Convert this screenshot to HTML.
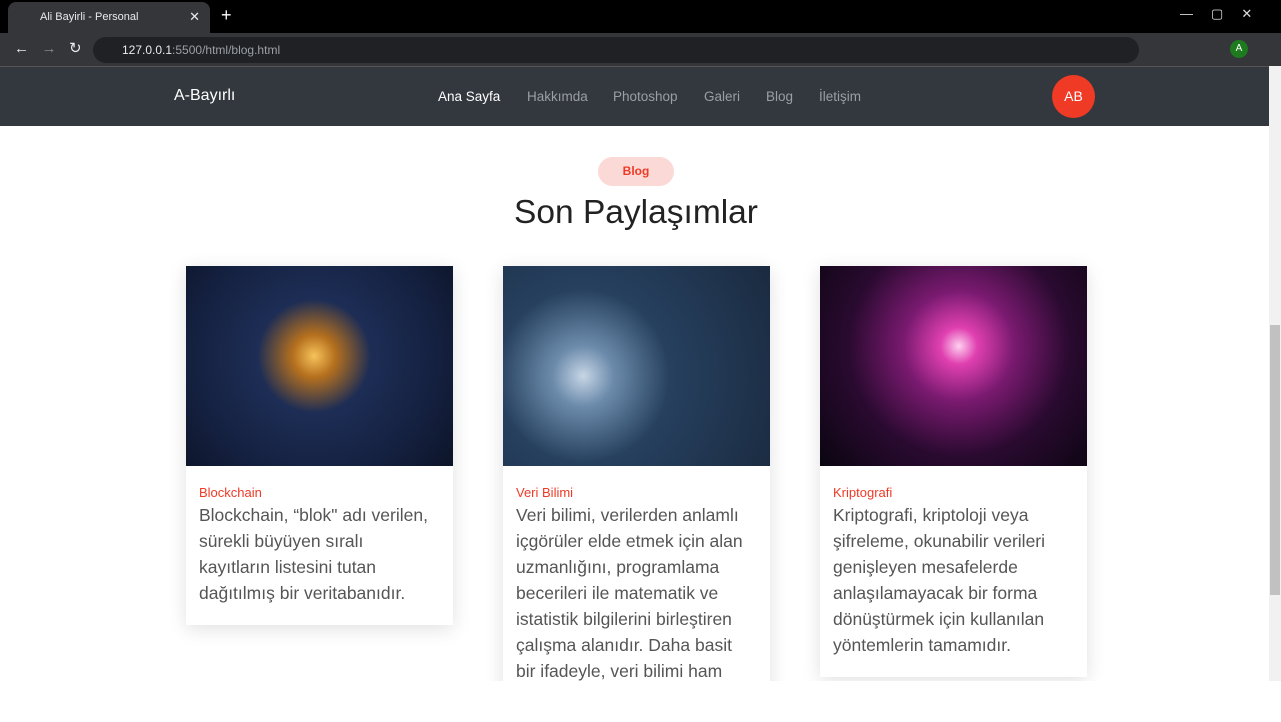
<!DOCTYPE html>
<html><head><meta charset="utf-8"><style>
*{margin:0;padding:0;box-sizing:border-box}
html,body{width:1281px;height:722px;overflow:hidden}
body{background:#fff;font-family:"Liberation Sans",sans-serif;position:relative}
.tabbar{position:absolute;left:0;top:0;width:1281px;height:33px;background:#000}
.tab{position:absolute;left:8px;top:2px;width:202px;height:31px;background:#35363a;border-radius:8px 8px 0 0;color:#e8eaed;font-size:11px;padding:9px 0 0 32px}
.tab .x{position:absolute;right:10px;top:7px;font-size:13px}
.tool{position:absolute;left:0;top:33px;width:1281px;height:33px;background:#35363a}
.url{position:absolute;left:93px;top:4px;width:1046px;height:26px;background:#202124;border-radius:13px;color:#9aa0a6;font-size:12px;padding:6px 0 0 29px}
.url b{color:#e8eaed;font-weight:normal}
.nav{position:absolute;left:0;top:66px;width:1269px;height:60px;background:#33373e;border-top:1px solid #555}
.nav a{position:absolute;top:22px;font-size:13.5px;color:#9a9ea5}
.ab{position:absolute;left:1052px;top:8px;width:43px;height:43px;border-radius:50%;background:#ef3a26;color:#fff;font-size:14px;text-align:center;line-height:43px}
.sb{position:absolute;left:1269px;top:66px;width:12px;height:615px;background:#f1f1f1}
.sb i{position:absolute;left:1px;top:259px;width:10px;height:270px;background:#c1c1c1}
.pill{position:absolute;left:598px;top:157px;width:76px;height:29px;border-radius:15px;background:#fbd9d6;color:#ef3a26;font-size:12px;font-weight:bold;text-align:center;line-height:29px}
h1{position:absolute;left:0;width:1272px;top:194px;text-align:center;font-weight:normal;font-size:33.5px;color:#222}
.card{position:absolute;top:266px;width:267px;background:#fff;box-shadow:0 4px 18px rgba(0,0,0,.12)}
.img{height:200px}
.cat{color:#ef3a26;font-size:13px;margin:19px 13px 2px}
.txt{color:#555;font-size:17.5px;line-height:26px;margin:0 13px 19px;white-space:nowrap}
.clip{position:absolute;left:0;top:681px;width:1281px;height:41px;background:#fff;z-index:10}
</style></head><body>
<div class="tabbar"><div class="tab">Ali Bayirli - Personal<span class="x">✕</span></div><span style="position:absolute;left:221px;top:5px;color:#fff;font-size:18px">+</span>
<span style="position:absolute;left:1180px;top:6px;color:#ddd;font-size:13px">—&nbsp;&nbsp;&nbsp;&nbsp;&nbsp;▢&nbsp;&nbsp;&nbsp;&nbsp;&nbsp;✕</span></div>
<div class="tool"><span style="position:absolute;left:14px;top:6px;color:#e8eaed;font-size:15px">←&nbsp;&nbsp; <span style="color:#888">→</span>&nbsp;&nbsp; ↻</span>
<div class="url"><b>127.0.0.1</b>:5500/html/blog.html</div>
<div style="position:absolute;left:1230px;top:7px;width:18px;height:18px;border-radius:50%;background:#1e7a1e;color:#fff;font-size:10px;text-align:center;line-height:18px">A</div></div>
<div class="nav">
<span style="position:absolute;left:174px;top:20px;color:#fff;font-size:16px">A-Bayırlı</span>
<a style="left:438px;color:#fff">Ana Sayfa</a><a style="left:527px">Hakkımda</a><a style="left:613px">Photoshop</a><a style="left:704px">Galeri</a><a style="left:766px">Blog</a><a style="left:819px">İletişim</a>
<div class="ab">AB</div></div>
<div class="sb"><i></i></div>
<div class="pill">Blog</div>
<h1>Son Paylaşımlar</h1>
<div class="card" style="left:186px"><div class="img" style="background:radial-gradient(circle at 48% 45%,#f7c25a 0,#b5701e 12%,#1d2d55 32%,#14203f 70%,#0c1428 100%)"></div>
<div class="cat">Blockchain</div><div class="txt">Blockchain, “blok" adı verilen,<br>sürekli büyüyen sıralı<br>kayıtların listesini tutan<br>dağıtılmış bir veritabanıdır.</div></div>
<div class="card" style="left:503px"><div class="img" style="background:radial-gradient(circle at 30% 55%,#c7d6e6 0,#6c8bab 14%,#26405e 40%,#1a2a40 100%)"></div>
<div class="cat">Veri Bilimi</div><div class="txt">Veri bilimi, verilerden anlamlı<br>içgörüler elde etmek için alan<br>uzmanlığını, programlama<br>becerileri ile matematik ve<br>istatistik bilgilerini birleştiren<br>çalışma alanıdır. Daha basit<br>bir ifadeyle, veri bilimi ham<br>verileri</div></div>
<div class="card" style="left:820px"><div class="img" style="background:radial-gradient(circle at 52% 40%,#ffd0f0 0,#e040b0 10%,#7a1a70 30%,#2a0a30 60%,#0a0510 100%)"></div>
<div class="cat">Kriptografi</div><div class="txt">Kriptografi, kriptoloji veya<br>şifreleme, okunabilir verileri<br>genişleyen mesafelerde<br>anlaşılamayacak bir forma<br>dönüştürmek için kullanılan<br>yöntemlerin tamamıdır.</div></div>
<div class="clip"></div>
</body></html>
